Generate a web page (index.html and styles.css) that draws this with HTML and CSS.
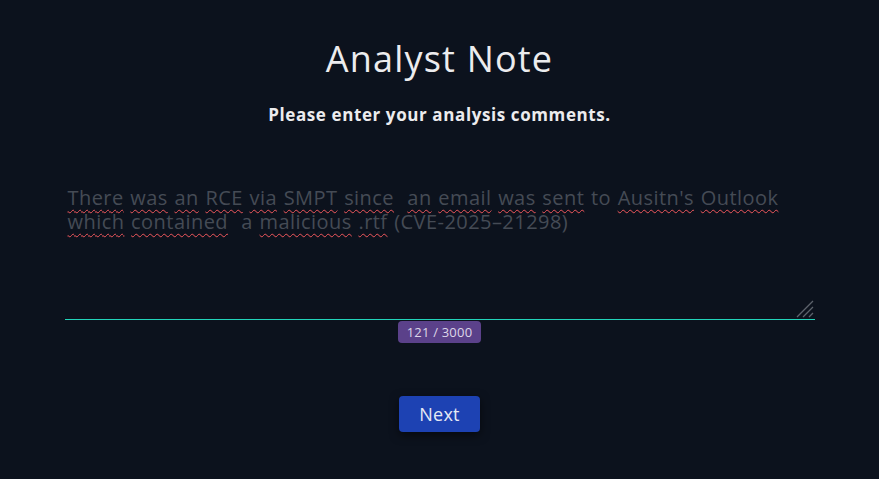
FILE: index.html
```html
<!DOCTYPE html>
<html lang="en">
<head>
<meta charset="utf-8">
<title>Analyst Note</title>
<link rel="stylesheet" href="styles.css">
</head>
<body>
<main class="page">
  <h1 class="title">Analyst Note</h1>
  <p class="subtitle">Please enter your analysis comments.</p>
  <div class="field">
    <div class="textarea" role="textbox" aria-multiline="true"><span class="sp">There</span> <span class="sp">was</span> <span class="sp">an</span> <span class="sp">RCE</span> <span class="sp">via</span> <span class="sp">SMPT</span> <span class="sp">since</span>&nbsp; <span class="sp">an</span> <span class="sp">email</span> <span class="sp">was</span> <span class="sp">sent</span> to <span class="sp">Ausitn's</span> <span class="sp">Outlook</span> <span class="sp">which</span> <span class="sp">contained</span>&nbsp; a <span class="sp">malicious</span> <span class="sp">.rtf</span> (CVE-2025–21298)</div>
    <svg class="grip" width="18" height="18" viewBox="0 0 18 18" aria-hidden="true">
      <path d="M17 1 L1 17 M17 7 L7 17 M17 13 L13 17" stroke="#5d636c" stroke-width="1.3" fill="none"/>
    </svg>
  </div>
  <div class="counter">121 / 3000</div>
  <button class="next" type="button">Next</button>
</main>
</body>
</html>
```
FILE: styles.css
```css
html, body {
  margin: 0;
  padding: 0;
  background: #0c121d;
  height: 100%;
}
body {
  font-family: "Open Sans", "DejaVu Sans", sans-serif;
  color: #e8e8ea;
}
.page {
  display: flex;
  flex-direction: column;
  align-items: center;
  padding-top: 37px;
}
.title {
  margin: 0;
  font-size: 36px;
  font-weight: 400;
  line-height: 44px;
  letter-spacing: 1.2px;
  color: #ececee;
}
.subtitle {
  margin: 23px 0 0;
  font-size: 17px;
  font-weight: 700;
  line-height: 22px;
  letter-spacing: 0.6px;
  color: #ececee;
}
.field {
  position: relative;
  margin-top: 52px;
  width: 750px;
  height: 142px;
  box-sizing: border-box;
}
.field::after {
  content: "";
  position: absolute;
  left: 0;
  right: 0;
  bottom: 0;
  height: 1px;
  background: #22d3b9;
}
.textarea {
  padding: 8px 3px 0;
  font-size: 20px;
  line-height: 24px;
  color: #454b55;
  letter-spacing: 0.45px;
  word-spacing: 1px;
}
.sp {
  text-decoration: underline wavy #f0565c;
  text-decoration-thickness: 1px;
  text-underline-offset: 4px;
}
.grip {
  position: absolute;
  right: 1px;
  bottom: 2px;
}
.counter {
  margin-top: 1px;
  background: #5b418a;
  color: #dcd6e8;
  font-size: 13px;
  line-height: 22px;
  letter-spacing: 0.2px;
  padding: 0 9px;
  border-radius: 4px;
}
.next {
  margin-top: 53px;
  background: #1d42b3;
  color: #e6e9f4;
  border: none;
  border-radius: 4px;
  font-family: inherit;
  font-size: 18px;
  letter-spacing: 0.3px;
  width: 81px;
  height: 36px;
  box-shadow: 0 3px 10px rgba(0, 0, 0, 0.55);
}
```
